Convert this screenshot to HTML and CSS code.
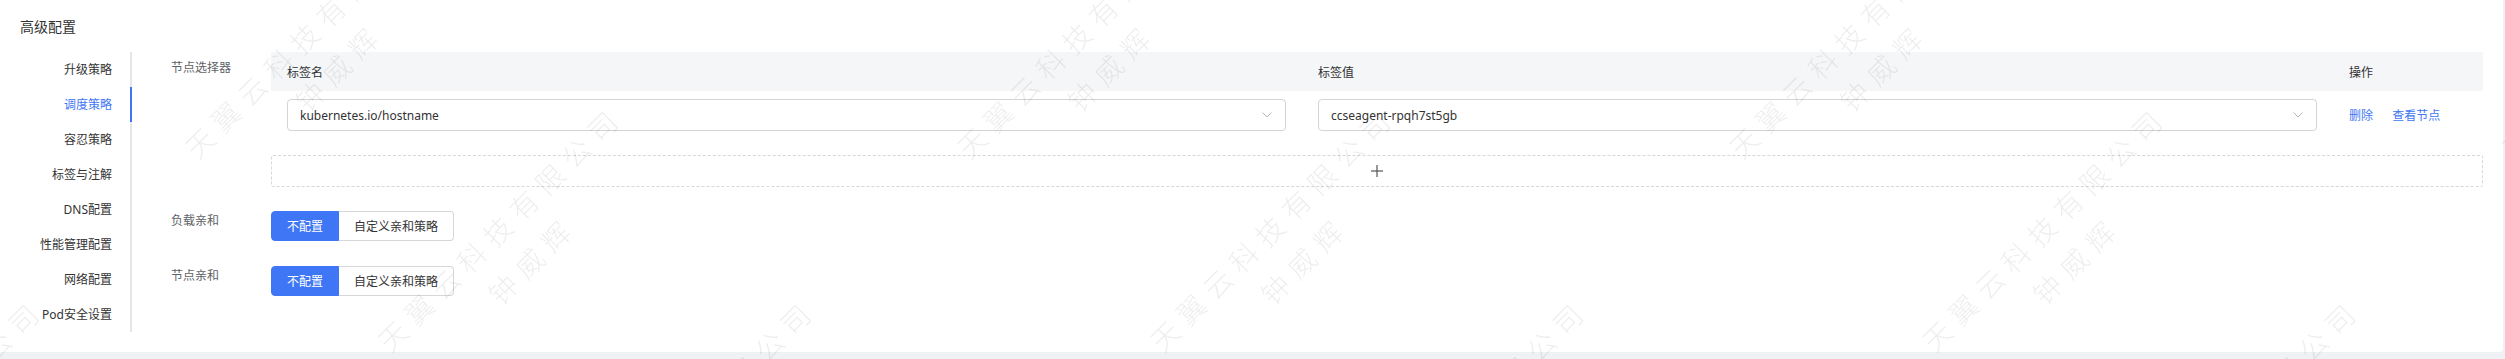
FILE: index.html
```html
<!DOCTYPE html>
<html lang="zh-CN">
<head>
	<meta charset="UTF-8">
	<title>高级配置</title>
	<link rel="stylesheet" href="styles.css">
</head>
<body>
	<div class="card">
		<div class="card-title">高级配置</div>
		<div class="card-body">
			<ul class="side-menu">
				<li>升级策略</li>
				<li class="active">调度策略</li>
				<li>容忍策略</li>
				<li>标签与注解</li>
				<li>DNS配置</li>
				<li>性能管理配置</li>
				<li>网络配置</li>
				<li>Pod安全设置</li>
			</ul>
			<div class="form">
				<div class="form-item item-selector">
					<label class="form-label">节点选择器</label>
					<div class="form-control">
						<table class="selector-table">
							<colgroup>
								<col>
								<col>
								<col class="col-op">
							</colgroup>
							<thead>
								<tr>
									<th>标签名</th>
									<th>标签值</th>
									<th>操作</th>
								</tr>
							</thead>
							<tbody>
								<tr>
									<td>
										<div class="select">
											<span>kubernetes.io/hostname</span>
											<svg class="chevron" width="10" height="6" viewBox="0 0 10 6"><polyline points="0.5,0.5 5,5 9.5,0.5"/></svg>
										</div>
									</td>
									<td>
										<div class="select">
											<span>ccseagent-rpqh7st5gb</span>
											<svg class="chevron" width="10" height="6" viewBox="0 0 10 6"><polyline points="0.5,0.5 5,5 9.5,0.5"/></svg>
										</div>
									</td>
									<td>
										<a class="link">删除</a>
										<a class="link">查看节点</a>
									</td>
								</tr>
							</tbody>
						</table>
						<div class="add-row">
							<svg width="12" height="12" viewBox="0 0 12 12"><line x1="6" y1="0" x2="6" y2="12"/><line x1="0" y1="6" x2="12" y2="6"/></svg>
						</div>
					</div>
				</div>
				<div class="form-item item-workload">
					<label class="form-label">负载亲和</label>
					<div class="btn-group">
						<button class="active">不配置</button>
						<button>自定义亲和策略</button>
					</div>
				</div>
				<div class="form-item item-node">
					<label class="form-label">节点亲和</label>
					<div class="btn-group">
						<button class="active">不配置</button>
						<button>自定义亲和策略</button>
					</div>
				</div>
			</div>
		</div>
	</div>

	<div class="watermark">
		<div class="wm-grid">
			<div class="wm-cell"><span>天翼云科技有限公司</span><span>钟威辉</span></div>
			<div class="wm-cell"><span>天翼云科技有限公司</span><span>钟威辉</span></div>
			<div class="wm-cell"><span>天翼云科技有限公司</span><span>钟威辉</span></div>
			<div class="wm-cell"><span>天翼云科技有限公司</span><span>钟威辉</span></div>
			<div class="wm-cell"><span>天翼云科技有限公司</span><span>钟威辉</span></div>
			<div class="wm-cell"><span>天翼云科技有限公司</span><span>钟威辉</span></div>
			<div class="wm-cell"><span>天翼云科技有限公司</span><span>钟威辉</span></div>
			<div class="wm-cell"><span>天翼云科技有限公司</span><span>钟威辉</span></div>
			<div class="wm-cell"><span>天翼云科技有限公司</span><span>钟威辉</span></div>
			<div class="wm-cell"><span>天翼云科技有限公司</span><span>钟威辉</span></div>
			<div class="wm-cell"><span>天翼云科技有限公司</span><span>钟威辉</span></div>
			<div class="wm-cell"><span>天翼云科技有限公司</span><span>钟威辉</span></div>
			<div class="wm-cell"><span>天翼云科技有限公司</span><span>钟威辉</span></div>
			<div class="wm-cell"><span>天翼云科技有限公司</span><span>钟威辉</span></div>
			<div class="wm-cell"><span>天翼云科技有限公司</span><span>钟威辉</span></div>
			<div class="wm-cell"><span>天翼云科技有限公司</span><span>钟威辉</span></div>
			<div class="wm-cell"><span>天翼云科技有限公司</span><span>钟威辉</span></div>
			<div class="wm-cell"><span>天翼云科技有限公司</span><span>钟威辉</span></div>
			<div class="wm-cell"><span>天翼云科技有限公司</span><span>钟威辉</span></div>
			<div class="wm-cell"><span>天翼云科技有限公司</span><span>钟威辉</span></div>
			<div class="wm-cell"><span>天翼云科技有限公司</span><span>钟威辉</span></div>
			<div class="wm-cell"><span>天翼云科技有限公司</span><span>钟威辉</span></div>
			<div class="wm-cell"><span>天翼云科技有限公司</span><span>钟威辉</span></div>
			<div class="wm-cell"><span>天翼云科技有限公司</span><span>钟威辉</span></div>
			<div class="wm-cell"><span>天翼云科技有限公司</span><span>钟威辉</span></div>
			<div class="wm-cell"><span>天翼云科技有限公司</span><span>钟威辉</span></div>
			<div class="wm-cell"><span>天翼云科技有限公司</span><span>钟威辉</span></div>
			<div class="wm-cell"><span>天翼云科技有限公司</span><span>钟威辉</span></div>
			<div class="wm-cell"><span>天翼云科技有限公司</span><span>钟威辉</span></div>
			<div class="wm-cell"><span>天翼云科技有限公司</span><span>钟威辉</span></div>
			<div class="wm-cell"><span>天翼云科技有限公司</span><span>钟威辉</span></div>
			<div class="wm-cell"><span>天翼云科技有限公司</span><span>钟威辉</span></div>
			<div class="wm-cell"><span>天翼云科技有限公司</span><span>钟威辉</span></div>
			<div class="wm-cell"><span>天翼云科技有限公司</span><span>钟威辉</span></div>
			<div class="wm-cell"><span>天翼云科技有限公司</span><span>钟威辉</span></div>
			<div class="wm-cell"><span>天翼云科技有限公司</span><span>钟威辉</span></div>
			<div class="wm-cell"><span>天翼云科技有限公司</span><span>钟威辉</span></div>
			<div class="wm-cell"><span>天翼云科技有限公司</span><span>钟威辉</span></div>
			<div class="wm-cell"><span>天翼云科技有限公司</span><span>钟威辉</span></div>
			<div class="wm-cell"><span>天翼云科技有限公司</span><span>钟威辉</span></div>
			<div class="wm-cell"><span>天翼云科技有限公司</span><span>钟威辉</span></div>
			<div class="wm-cell"><span>天翼云科技有限公司</span><span>钟威辉</span></div>
			<div class="wm-cell"><span>天翼云科技有限公司</span><span>钟威辉</span></div>
			<div class="wm-cell"><span>天翼云科技有限公司</span><span>钟威辉</span></div>
			<div class="wm-cell"><span>天翼云科技有限公司</span><span>钟威辉</span></div>
		</div>
	</div>
</body>
</html>
```

FILE: styles.css
```css
body {
	margin: 0;
	background-color: #f0f1f5;
	font-family: "Noto Sans", "Noto Sans CJK SC", sans-serif;
	font-size: 12px;
	color: #333;
}
.card {
	width: calc(100% - 2px);
	height: 352px;
	box-sizing: border-box;
	padding: 16px 20px 20px;
	background-color: #fff;
	border-radius: 0 0 4px 0;
}
.card-title {
	font-size: 14px;
	line-height: 22px;
	color: #333;
}
.card-body {
	display: flex;
	margin-top: 14px;
}

/* left menu */
.side-menu {
	list-style: none;
	margin: 0;
	padding: 0;
	width: 112px;
	flex-shrink: 0;
	box-sizing: border-box;
	border-right: 2px solid #e5e6eb;
}
.side-menu li {
	position: relative;
	height: 35px;
	line-height: 35px;
	padding-right: 18px;
	text-align: right;
	white-space: nowrap;
}
.side-menu li.active {
	color: #3f76f5;
}
.side-menu li.active::after {
	content: "";
	position: absolute;
	top: 0;
	right: -2px;
	width: 2px;
	height: 100%;
	background-color: #3f76f5;
}

/* form */
.form {
	flex: 1;
	min-width: 0;
	margin-left: 39px;
}
.form-item {
	display: flex;
}
.form-label {
	width: 100px;
	flex-shrink: 0;
	line-height: 20px;
	color: #606266;
}
.item-selector .form-label {
	padding-top: 6px;
}
.item-workload {
	margin-top: 24px;
}
.item-node {
	margin-top: 25px;
}
.form-control {
	flex: 1;
	min-width: 0;
}

/* selector table */
.selector-table {
	width: 100%;
	border-collapse: collapse;
	table-layout: fixed;
}
.selector-table col.col-op {
	width: 150px;
}
.selector-table th {
	height: 39px;
	padding: 0 16px;
	background-color: #f5f6f8;
	text-align: left;
	font-weight: normal;
	color: #303133;
}
.selector-table td {
	padding: 8px 16px;
}
.select {
	display: flex;
	align-items: center;
	justify-content: space-between;
	height: 32px;
	box-sizing: border-box;
	padding: 0 13px 0 12px;
	border: 1px solid #d3d4d6;
	border-radius: 4px;
	color: #333;
}
.chevron polyline {
	fill: none;
	stroke: #b4b6ba;
	stroke-width: 1;
}
.link {
	color: #3f76f5;
	margin-right: 16px;
	cursor: pointer;
}
.add-row {
	display: flex;
	align-items: center;
	justify-content: center;
	height: 32px;
	box-sizing: border-box;
	margin-top: 16px;
	border: 1px dashed #d6d7da;
	border-radius: 2px;
}
.add-row line {
	stroke: #555;
	stroke-width: 1.2;
}

/* button group */
.btn-group {
	display: flex;
}
.btn-group button {
	height: 30px;
	padding: 0 15px;
	border: 1px solid #d6d7da;
	background-color: #fff;
	color: #333;
	font-family: inherit;
	font-size: 12px;
	cursor: pointer;
}
.btn-group button:first-child {
	border-radius: 4px 0 0 4px;
}
.btn-group button:last-child {
	border-left: none;
	border-radius: 0 4px 4px 0;
}
.btn-group button.active {
	background-color: #3f76f5;
	border-color: #3f76f5;
	color: #fff;
}

/* watermark overlay */
.watermark {
	position: fixed;
	top: 0;
	left: 0;
	right: 0;
	bottom: 0;
	overflow: hidden;
	pointer-events: none;
	z-index: 10;
}
.wm-grid {
	position: absolute;
	left: -549.5px;
	top: 342.5px;
	display: grid;
	grid-template-columns: repeat(5, 546px);
	grid-auto-rows: 273px;
	transform: rotate(-45deg);
	transform-origin: 0 0;
}
.wm-cell {
	display: flex;
	flex-direction: column;
	align-items: center;
	justify-content: center;
	font-family: "Noto Sans CJK SC", sans-serif;
	font-size: 28px;
	font-weight: 300;
	line-height: 45px;
	letter-spacing: 9px;
	white-space: nowrap;
	color: rgba(0, 0, 0, .07);
}
.wm-cell span {
	padding-left: 9px;
}
```
